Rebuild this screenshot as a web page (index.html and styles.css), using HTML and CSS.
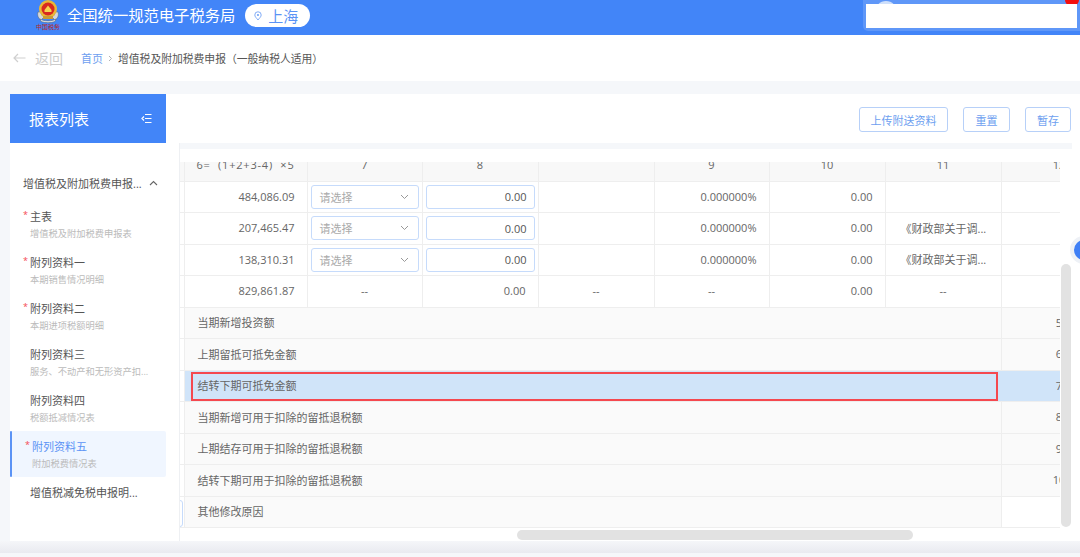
FILE: index.html
```html
<!DOCTYPE html>
<html lang="zh-CN">
<head>
    <meta charset="UTF-8">
    <title>增值税及附加税费申报</title>
    <link rel="stylesheet" href="styles.css">
</head>
<body>
    <header class="topbar">
        <div class="logo">
            <svg class="emblem" width="26" height="24" viewBox="0 0 26 24">
                <path d="M3 12c-1 3 0 6 3 8l3-3c-2-1-3-3-3-5z" fill="#d5d8da" stroke="#5d6670" stroke-width="0.500"/>
                <path d="M23 12c1 3 0 6-3 8l-3-3c2-1 3-3 3-5z" fill="#d5d8da" stroke="#5d6670" stroke-width="0.500"/>
                <path d="M5 19c4 2.500 12 2.500 16 0l-1 2.500c-4 1.500-10 1.500-14 0z" fill="#e6e7e8" stroke="#4e5862" stroke-width="0.500"/>
                <circle cx="13" cy="9" r="9" fill="#e9b737"/>
                <circle cx="13" cy="9" r="6.500" fill="#d8281f"/>
                <path d="M9.500 10l3.500-4.500 3.500 4.500v2h-7z" fill="#f6d24e"/>
                <path d="M8 16h10v3H8z" fill="#c99a35"/>
            </svg>
            <span class="emblem-text">中国税务</span>
        </div>
        <h1 class="site-name">全国统一规范电子税务局</h1>
        <div class="city">
            <svg width="10" height="12" viewBox="0 0 10 12"><path d="M5 11C3 8.500 1 6.800 1 4.700a4 4 0 0 1 8 0C9 6.800 7 8.500 5 11z" fill="none" stroke="#6fa0f5" stroke-width="1.100"/><circle cx="5" cy="4.700" r="1.300" fill="#6fa0f5"/></svg>
            <span>上海</span>
        </div>
        <div class="user-box">
            <div class="user-avatar"></div>
            <div class="user-badge"></div>
            <div class="user-mask"></div>
        </div>
    </header>

    <nav class="crumbs">
        <a class="back">
            <svg width="13" height="10" viewBox="0 0 13 10"><path d="M12.500 5H1M5 1L1 5l4 4" fill="none" stroke="#cfcfcf" stroke-width="1.200"/></svg>
            <span>返回</span>
        </a>
        <a class="crumb-home">首页</a>
        <svg class="crumb-sep" width="5" height="7" viewBox="0 0 5 7"><path d="M1 1l2.500 2.500L1 6" fill="none" stroke="#aaa" stroke-width="0.900"/></svg>
        <span class="crumb-now">增值税及附加税费申报（一般纳税人适用）</span>
    </nav>

    <main class="workspace">
        <aside class="sidebar">
            <div class="side-head">
                <span>报表列表</span>
                <svg width="11" height="11" viewBox="0 0 11 11"><path d="M4 1.500h6.500M4 5.500h6.500M4 9.500h6.500M3 3.500L1 5.500l2 2" fill="none" stroke="#fff" stroke-width="1.200"/></svg>
            </div>
            <div class="side-body">
                <div class="side-group">
                    <span>增值税及附加税费申报...</span>
                    <svg width="9" height="6" viewBox="0 0 9 6"><path d="M1 5l3.500-3.500L8 5" fill="none" stroke="#666" stroke-width="1.100"/></svg>
                </div>
                <ul class="side-list">
                    <li class="side-item required"><b>主表</b><small>增值税及附加税费申报表</small></li>
                    <li class="side-item required"><b>附列资料一</b><small>本期销售情况明细</small></li>
                    <li class="side-item required"><b>附列资料二</b><small>本期进项税额明细</small></li>
                    <li class="side-item"><b>附列资料三</b><small>服务、不动产和无形资产扣...</small></li>
                    <li class="side-item"><b>附列资料四</b><small>税额抵减情况表</small></li>
                    <li class="side-item required active"><b>附列资料五</b><small>附加税费情况表</small></li>
                    <li class="side-item"><b>增值税减免税申报明...</b></li>
                </ul>
            </div>
        </aside>

        <section class="content">
            <div class="toolbar">
                <button class="btn">上传附送资料</button>
                <button class="btn reset">重置</button>
                <button class="btn short">暂存</button>
            </div>
            <div class="strip"></div>
            <div class="table-wrap">
                <table class="sheet">
                    <colgroup>
                        <col class="c-stub"><col class="c-a"><col class="c-b"><col class="c-c"><col class="c-c"><col class="c-b"><col class="c-c"><col class="c-c"><col class="c-c">
                    </colgroup>
                    <tr class="head-row">
                        <td></td><td class="formula">6=  (1+2+3-4)  ×5</td><td>7</td><td>8</td><td></td><td>9</td><td>10</td><td>11</td><td>12</td>
                    </tr>
                    <tr>
                        <td></td><td class="num">484,086.09</td>
                        <td class="field"><div class="select"><span>请选择</span><svg width="9" height="6" viewBox="0 0 9 6"><path d="M1 1l3.500 3.500L8 1" fill="none" stroke="#999" stroke-width="1"/></svg></div></td>
                        <td class="field"><div class="input">0.00</div></td>
                        <td></td><td class="num">0.000000%</td><td class="num">0.00</td><td class="note"></td><td></td>
                    </tr>
                    <tr>
                        <td></td><td class="num">207,465.47</td>
                        <td class="field"><div class="select"><span>请选择</span><svg width="9" height="6" viewBox="0 0 9 6"><path d="M1 1l3.500 3.500L8 1" fill="none" stroke="#999" stroke-width="1"/></svg></div></td>
                        <td class="field"><div class="input">0.00</div></td>
                        <td></td><td class="num">0.000000%</td><td class="num">0.00</td><td class="note">《财政部关于调...</td><td></td>
                    </tr>
                    <tr>
                        <td></td><td class="num">138,310.31</td>
                        <td class="field"><div class="select"><span>请选择</span><svg width="9" height="6" viewBox="0 0 9 6"><path d="M1 1l3.500 3.500L8 1" fill="none" stroke="#999" stroke-width="1"/></svg></div></td>
                        <td class="field"><div class="input">0.00</div></td>
                        <td></td><td class="num">0.000000%</td><td class="num">0.00</td><td class="note">《财政部关于调...</td><td></td>
                    </tr>
                    <tr>
                        <td></td><td class="num">829,861.87</td><td>--</td><td class="num">0.00</td><td>--</td><td>--</td><td class="num">0.00</td><td>--</td><td></td>
                    </tr>
                    <tr class="sum"><td></td><td class="label" colspan="7">当期新增投资额</td><td class="seq">5</td></tr>
                    <tr class="sum"><td></td><td class="label" colspan="7">上期留抵可抵免金额</td><td class="seq">6</td></tr>
                    <tr class="sum picked"><td></td><td class="label" colspan="7">结转下期可抵免金额<div class="red-box"></div></td><td class="seq">7</td></tr>
                    <tr class="sum"><td></td><td class="label" colspan="7">当期新增可用于扣除的留抵退税额</td><td class="seq">8</td></tr>
                    <tr class="sum"><td></td><td class="label" colspan="7">上期结存可用于扣除的留抵退税额</td><td class="seq">9</td></tr>
                    <tr class="sum"><td></td><td class="label" colspan="7">结转下期可用于扣除的留抵退税额</td><td class="seq">10</td></tr>
                    <tr class="sum"><td class="stub-input"></td><td class="label" colspan="7">其他修改原因</td><td class="seq blank"></td></tr>
                </table>
            </div>
            <div class="scroll-y"></div>
            <div class="scroll-x"></div>
            <div class="float-dot"></div>
        </section>
    </main>
    <div class="footer-shade"></div>
</body>
</html>
```

FILE: styles.css
```css
* {
    box-sizing: border-box;
}
html, body {
    margin: 0;
    height: 100%;
}
body {
    width: 1080px;
    height: 557px;
    overflow: hidden;
    background: #f5f7fa;
    color: #666;
    font-family: "Open Sans", "Noto Sans CJK SC", sans-serif;
    font-size: 11px;
}

/* top bar */
.topbar {
    position: relative;
    display: flex;
    align-items: flex-start;
    height: 35px;
    padding-left: 35px;
    background: #4285f8;
}
.logo {
    position: relative;
    width: 26px;
    height: 35px;
}
.emblem {
    display: block;
}
.emblem-text {
    position: absolute;
    left: 1px;
    top: 24px;
    font-size: 6px;
    line-height: 7px;
    color: #b9251f;
    white-space: nowrap;
}
.site-name {
    margin: 0 0 0 6px;
    color: #fff;
    font-weight: 400;
    font-size: 15.300px;
    line-height: 30px;
    white-space: nowrap;
}
.city {
    display: flex;
    align-items: center;
    gap: 6px;
    height: 23px;
    margin: 4px 0 0 10px;
    padding: 0 12px 0 9px;
    width: 65px;
    border-radius: 12px;
    background: #fff;
    color: #5b93f5;
    font-size: 15px;
    white-space: nowrap;
}
.user-box {
    position: absolute;
    right: 0;
    top: 0;
    width: 217px;
    height: 31px;
    border-radius: 0 0 0 5px;
    background: #5f97f8;
}
.user-avatar {
    position: absolute;
    left: 12px;
    top: 1px;
    width: 22px;
    height: 22px;
    border-radius: 50%;
    background: #cfe0fb;
}
.user-badge {
    position: absolute;
    right: 1px;
    top: 0;
    width: 14px;
    height: 6px;
    border-radius: 0 0 6px 6px;
    background: #f40f0f;
}
.user-mask {
    position: absolute;
    left: 3px;
    top: 4px;
    width: 211px;
    height: 24px;
    background: #fff;
}

/* breadcrumb */
.crumbs {
    display: flex;
    align-items: center;
    height: 46px;
    padding-left: 13px;
    background: #fff;
}
.back {
    display: flex;
    align-items: center;
    gap: 9px;
    width: 68px;
    color: #ccc;
    font-size: 14px;
}
.crumb-home {
    color: #6e9ff0;
}
.crumb-sep {
    margin: 0 5px;
}
.crumb-now {
    color: #555;
    font-size: 10.800px;
}

.workspace {
    display: flex;
    height: 447px;
    margin-top: 13px;
    padding-left: 10px;
}

/* report list */
.sidebar {
    flex: none;
    width: 170px;
    background: #fff;
}
.side-head {
    display: flex;
    align-items: center;
    justify-content: space-between;
    width: 156px;
    height: 49px;
    padding: 0 14px 0 19px;
    background: #4285f8;
    color: #fff;
    font-size: 15px;
}
.side-body {
    height: 398px;
    padding-top: 32px;
    border-right: 1px solid #eef0f3;
}
.side-group {
    display: flex;
    align-items: center;
    justify-content: space-between;
    width: 135px;
    height: 16px;
    margin-left: 13px;
    color: #555;
    white-space: nowrap;
}
.side-list {
    margin: 10px 0 0;
    padding: 0;
    list-style: none;
}
.side-item {
    position: relative;
    width: 156px;
    height: 46px;
    padding: 8px 0 0 20px;
}
.side-item b {
    display: block;
    color: #555;
    font-weight: 400;
    line-height: 16px;
    white-space: nowrap;
}
.side-item small {
    display: block;
    margin-top: 2px;
    color: #bbb;
    font-size: 9.250px;
    line-height: 14px;
    white-space: nowrap;
}
.required::before {
    content: "*";
    position: absolute;
    left: 13px;
    top: 8px;
    color: #f5484f;
    font-size: 9px;
    line-height: 12px;
}
.side-item.active {
    padding-left: 22px;
    background: #f0f6ff;
    border-radius: 2px;
}
.side-item.active::after {
    content: "";
    position: absolute;
    left: 0;
    top: 0;
    bottom: 0;
    width: 2px;
    border-radius: 2px;
    background: #5b93f5;
}
.side-item.active::before {
    left: 15px;
}
.side-item.active b {
    color: #5b93f5;
}

/* main panel */
.content {
    position: relative;
    flex: 1;
    min-width: 0;
    background: #fff;
}
.toolbar {
    display: flex;
    justify-content: flex-end;
    gap: 15px;
    height: 49px;
    padding: 13px 9px 0 0;
}
.btn {
    width: 89px;
    height: 25px;
    padding: 0;
    border: 1px solid #b7d0f8;
    border-radius: 3px;
    background: #fff;
    color: #6e9ff0;
    font: inherit;
}
.btn.reset {
    width: 47px;
}
.btn.short {
    width: 46px;
}
.strip {
    height: 6px;
    margin-right: 8px;
    background: #f5f7fa;
}
.table-wrap {
    width: 880px;
    height: 366px;
    margin-top: 13px;
    overflow: hidden;
}
.sheet {
    width: 937px;
    table-layout: fixed;
    border-collapse: collapse;
}
.c-stub { width: 4px; }
.c-a { width: 123px; }
.c-b { width: 115px; }
.c-c { width: 116px; }
.sheet td {
    height: 31.500px;
    padding: 0 8px 1px;
    border-bottom: 1px solid #eee;
    border-right: 1px solid #eee;
    text-align: center;
    white-space: nowrap;
    overflow: hidden;
}
.sheet td:first-child {
    padding: 0;
}
.sheet .head-row td {
    height: 19px;
    padding-bottom: 0;
    background: #f8f8f8;
    line-height: 6px;
    vertical-align: top;
    overflow: visible;
}
.sheet .head-row .formula {
    padding: 0;
    letter-spacing: 0.800px;
    white-space: pre;
}
.sheet .num {
    text-align: right;
    padding-right: 12px;
}
.sheet .field {
    padding: 0 3px;
}
.select, .input {
    display: flex;
    align-items: center;
    height: 24px;
    border: 1px solid #c6dbfb;
    border-radius: 3px;
    background: #fff;
}
.select {
    justify-content: space-between;
    padding: 0 9px 0 8px;
    color: #aaa;
}
.input {
    justify-content: flex-end;
    padding-right: 7px;
    color: #555;
}
.sheet .note {
    text-align: left;
    padding-left: 15px;
}
.sum td {
    background: #fafafa;
}
.sum td:first-child {
    background: #fff;
}
.sheet .label {
    position: relative;
    padding-left: 13px;
    text-align: left;
}
.sum .blank {
    background: #fff;
}
.picked td:not(:first-child) {
    background: #d0e4f9;
    border-right-color: #d0e4f9;
}
.sheet .picked .label {
    overflow: visible;
}
.red-box {
    position: absolute;
    left: 6px;
    right: 3px;
    top: 1px;
    bottom: 0;
    border: 2px solid #f5484f;
}
.stub-input {
    position: relative;
}
.stub-input::after {
    content: "";
    position: absolute;
    left: -10px;
    top: 3px;
    width: 11px;
    height: 25px;
    border: 1px solid #c6dbfb;
    border-radius: 3px;
}
.scroll-y {
    position: absolute;
    left: 881px;
    top: 170px;
    width: 10px;
    height: 263px;
    border-radius: 5px;
    background: #e2e2e2;
}
.scroll-x {
    position: absolute;
    left: 337px;
    top: 436px;
    width: 396px;
    height: 10px;
    border-radius: 5px;
    background: #e2e2e2;
}
.float-dot {
    position: absolute;
    left: 890px;
    top: 142px;
    width: 28px;
    height: 28px;
    border: 4px solid #eef1f6;
    border-radius: 50%;
    background: #3f7ff5;
}
.footer-shade {
    height: 12px;
    background: linear-gradient(to bottom, #f5f6f9, #e9eaf0);
}
```
